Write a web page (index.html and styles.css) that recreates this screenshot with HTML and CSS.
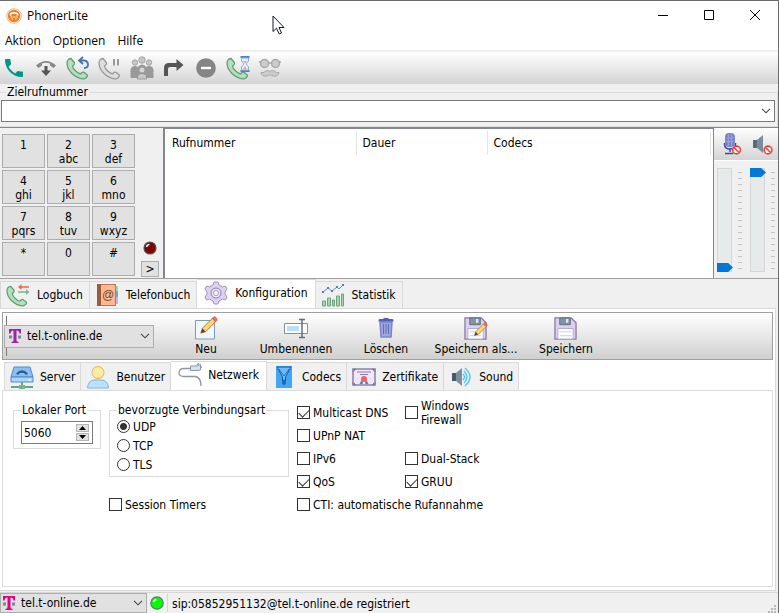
FILE: index.html
```html
<!DOCTYPE html>
<html lang="de">
<head>
<meta charset="utf-8">
<title>PhonerLite</title>
<link rel="stylesheet" href="styles.css">
</head>
<body>
<svg class="defs" aria-hidden="true">
  <symbol id="handset" viewBox="0 0 24 24"><path d="M1 7C1 4 3 2.500 5 2.500L8.300 6.500C9 7.500 8 9 6.500 10C7 13 11 17.200 14.500 18C15.500 16.500 17 15.800 18 16.300L21.500 19.300C21.500 21 19.500 22.800 17 22.800C9 22 1 14.500 1 7Z" stroke-width="1.300" stroke-linejoin="round"/></symbol>
  <symbol id="telekom" viewBox="0 0 14 16"><path d="M1 1H13V5.500H11.500C11.300 3.500 10.500 2.500 8.500 2.500V12C8.500 13.300 9 13.800 10.500 13.800V15H3.500V13.800C5 13.800 5.500 13.300 5.500 12V2.500C3.500 2.500 2.700 3.500 2.500 5.500H1Z"/><path fill="#788896" d="M1 7.500H4V10.500H1ZM10 7.500H13V10.500H10Z"/></symbol>
  <symbol id="chevron" viewBox="0 0 10 6"><path d="M1 .8L5 4.800L9 .8" fill="none" stroke="#444" stroke-width="1.100"/></symbol>
  <symbol id="pencil" viewBox="0 0 20 20"><path d="M2 18L3.500 13L14 2.500L17.500 6L7 16.500Z" fill="#ffd76b" stroke="#a0783c"/><path d="M2 18L3.500 13L7 16.500Z" fill="#574545"/><path d="M14 2.500L15.500 1Q18.500 .5 19 4.500L17.500 6Z" fill="#ef6f66" stroke="#b9605a"/></symbol>
  <symbol id="blocked" viewBox="0 0 10 10"><circle cx="5" cy="5" r="3.900" fill="#fff" stroke="#f44336" stroke-width="1.600"/><path d="M2.500 2.500L7.500 7.500" stroke="#f44336" stroke-width="1.600"/></symbol>
  <symbol id="floppy" viewBox="0 0 24 24"><path d="M1 1H18L23 6V23H1Z" fill="#dcd0f2" stroke="#8b75a1" stroke-width="1.300"/><path d="M6 1H17V8H6Z" fill="#8295a5" stroke="#5d6d80"/><path d="M12.500 2H15V6H12.500Z" fill="#dce9ef"/><path d="M4 12H20V23H4Z" fill="#fff" stroke="#b7a9cc"/><path d="M6 15.500H18M6 19.500H18" stroke="#a8dcf5"/></symbol>
</svg>

<div class="window">
  <header class="titlebar">
    <svg class="app-icon" viewBox="0 0 16 16"><circle cx="8" cy="8" r="7.300" fill="#fff" stroke="#f5b583"/><circle cx="8" cy="8" r="6.200" fill="#ee7f22"/><path d="M3.500 7.500Q3 4 8 4T12.500 7.500H10.500V6Q8 5.300 5.500 6V7.500Z" fill="#fff"/><path d="M4.500 9H6.500M7.300 9H8.700M9.500 9H11.500M5.500 11H7M9 11H10.500" stroke="#fff"/></svg>
    <h1>PhonerLite</h1>
    <div class="window-buttons">
      <button aria-label="Minimieren"><svg viewBox="0 0 12 12"><path d="M1 6.500H11"/></svg></button>
      <button aria-label="Maximieren"><svg viewBox="0 0 12 12"><path d="M1.500 1.500H10.500V10.500H1.500Z"/></svg></button>
      <button aria-label="Schließen"><svg viewBox="0 0 12 12"><path d="M1 1L11 11M11 1L1 11"/></svg></button>
    </div>
  </header>
  <nav class="menubar"><button>Aktion</button><button>Optionen</button><button>Hilfe</button></nav>

  <div class="toolbar">
    <button aria-label="Anrufen"><svg viewBox="0 0 24 24"><path fill="#009688" d="M6.600 10.800C8 13.600 10.400 15.900 13.200 17.400L15.400 15.200C15.700 14.900 16.100 14.800 16.400 15C17.500 15.400 18.700 15.600 20 15.600C20.600 15.600 21 16 21 16.600V20C21 20.600 20.600 21 20 21C10.600 21 3 13.400 3 4C3 3.400 3.500 3 4 3H7.500C8.100 3 8.500 3.400 8.500 4C8.500 5.300 8.700 6.500 9.100 7.600C9.200 8 9.100 8.300 8.900 8.600Z"/></svg></button>
    <button aria-label="Auflegen"><svg viewBox="0 0 24 24"><path fill="#888" d="M2 9.500Q12 .5 22 9.500L19.500 12L16 9.500V7.500Q12 6 8 7.500V9.500L4.500 12Z"/><path fill="#555" d="M10.500 10H13.500V14.500H17L12 20L7 14.500H10.500Z"/></svg></button>
    <button aria-label="Wahlwiederholung"><svg class="green" viewBox="0 0 24 24"><use href="#handset" width="24" height="24"/><path d="M17 1L13 4.500L17 8M13.500 4.500H18Q22 5 22 8.500T18 12" fill="none" stroke="#4474b8" stroke-width="1.800"/></svg></button>
    <button aria-label="Halten"><svg class="gray" viewBox="0 0 24 24"><use href="#handset" width="24" height="24"/><path d="M16 3V9.500M20 3V9.500" stroke="#999" stroke-width="2"/></svg></button>
    <button aria-label="Konferenz"><svg viewBox="0 0 24 24"><g fill="#c6c6c6" stroke="#999" stroke-width=".8"><circle cx="12" cy="4" r="3.200"/><circle cx="5" cy="6.500" r="2.700"/><circle cx="19" cy="6.500" r="2.700"/></g><path d="M.5 22V14Q1 10 5 10Q7 10 8 11Q9 8.500 12 8.500T16 11Q17 10 19 10Q23 10 23.500 14V22Z" fill="#999"/><circle cx="12" cy="14" r="2.500" fill="#d5d5d5"/><path d="M7.500 23V20Q8.500 17.500 12 17.500T16.500 20V23Z" fill="#c8c8c8" stroke="#888" stroke-width=".7"/></svg></button>
    <button aria-label="Weiterleiten"><svg viewBox="0 0 24 24"><path fill="#555" d="M2 20V12Q2 7 7 7H14.500V3L21.500 9L14.500 15V11H8Q6 11 6 13V20Z"/></svg></button>
    <button aria-label="Nicht stören"><svg viewBox="0 0 24 24"><circle cx="12" cy="12" r="9.800" fill="#858585"/><path d="M7 12H17" stroke="#fff" stroke-width="2.400"/></svg></button>
    <button aria-label="Anklopfen"><svg class="green" viewBox="0 0 24 24"><use href="#handset" width="24" height="24"/><path d="M14.500 1H23.500M14.500 15H23.500" stroke="#4b83d1" stroke-width="2"/><path d="M15.500 2H22.500V5L20 8L22.500 11V14H15.500V11L18 8L15.500 5Z" fill="#e9f3ff" stroke="#82aee6"/><path d="M17 5H21L19 7.500ZM17 13L19 10L21 13Z" fill="#e8a27c" stroke="none"/></svg></button>
    <button aria-label="Anonym"><svg viewBox="0 0 24 24"><g fill="#ccc" stroke="#aaa" stroke-width="1.500"><circle cx="6.500" cy="7.500" r="4"/><circle cx="17.500" cy="7.500" r="4"/><path d="M10.500 7H13.500M1 6H3M21 6H23" fill="none"/><path d="M12 15.500Q9.500 13 7 15.500Q5 17.500 3 16.500Q4 21 8.500 20Q11 20 12 18.500Q13 20 15.500 20Q20 21 21 16.500Q19 17.500 17 15.500Q14.500 13 12 15.500Z" stroke-width="1"/></g></svg></button>
  </div>

  <fieldset class="dial">
    <legend><label for="target">Zielrufnummer</label></legend>
    <div class="combo"><input id="target" type="text"><svg class="arrow"><use href="#chevron"/></svg></div>
  </fieldset>

  <section class="call">
    <div class="keys">
      <div class="keypad">
        <button>1</button><button>2<br>abc</button><button>3<br>def</button>
        <button>4<br>ghi</button><button>5<br>jkl</button><button>6<br>mno</button>
        <button>7<br>pqrs</button><button>8<br>tuv</button><button>9<br>wxyz</button>
        <button>*</button><button>0</button><button>#</button>
      </div>
      <div class="keys-side">
        <svg class="led" viewBox="0 0 14 14"><circle cx="7" cy="7" r="6" fill="#800000" stroke="#555" stroke-width="1.200"/><path d="M3.500 6Q4 3.500 6.500 3.500" fill="none" stroke="#fff" stroke-width="1.500"/></svg>
        <button class="more">&gt;</button>
      </div>
    </div>
    <div class="calls">
      <table>
        <thead><tr><th class="col-number">Rufnummer</th><th class="col-time">Dauer</th><th>Codecs</th></tr></thead>
      </table>
    </div>
    <div class="audio">
      <div class="audio-buttons">
        <button aria-label="Mikrofon stumm"><svg viewBox="0 0 24 24"><path d="M6.500 11V12Q6.500 17 12 17T17.500 12V11M12 17V20M7 21.500H15" fill="none" stroke="#3949ab" stroke-width="1.500"/><rect x="7" y="1" width="10" height="14" rx="4" fill="#7986cb"/><path d="M10.500 2V14M13.500 2V14M8 6H16M8 9.500H16" stroke="#9fa8da" stroke-width=".8"/><use href="#blocked" x="13.500" y="13" width="10" height="10"/></svg></button>
        <button aria-label="Lautsprecher stumm"><svg viewBox="0 0 24 24"><path d="M3 8H7V16H3Z" fill="#546e7a"/><path d="M7 8L13 3V21L7 16Z" fill="#78909c"/><use href="#blocked" x="13" y="13" width="10" height="10"/></svg></button>
      </div>
      <div class="sliders">
        <input type="range" min="0" max="16" value="0" aria-label="Mikrofonpegel">
        <span class="ticks"></span>
        <input type="range" min="0" max="16" value="16" aria-label="Lautstärke">
        <span class="ticks"></span>
      </div>
    </div>
  </section>

  <div class="tabs outer" role="tablist">
    <button role="tab" class="tab"><svg class="green" viewBox="0 0 24 24"><use href="#handset" y="1" width="23" height="23"/><path d="M13 4H23" stroke-width="1.600" stroke="#f4694c"/><path d="M12 9H22" stroke-width="1.600" stroke="#78bd91"/><path d="M12 4L15.500 1V7Z" fill="#f4694c" stroke="none"/><path d="M23.500 9L20 6V12Z" fill="#78bd91" stroke="none"/></svg>Logbuch</button>
    <button role="tab" class="tab"><svg viewBox="0 0 24 24"><path d="M20 3H23V8H20Z" fill="#a5d6a7"/><path d="M20 8H23V14H20Z" fill="#64a9e8"/><path d="M20 14H23V21H20Z" fill="#c5b5e9"/><rect x="2.500" y="1.500" width="18" height="21" fill="#ffb78d" stroke="#bf7650"/><path d="M2 1H6V23H2Z" fill="#995b40"/><text x="7" y="15.500" class="at-sign">@</text></svg>Telefonbuch</button>
    <button role="tab" class="tab active" aria-selected="true"><svg viewBox="0 0 24 24"><path d="M10 1H14L15 4L18.500 6L21.500 5L23 8L21 11V13L23 16L21.500 19L18.500 18L15 20L14 23H10L9 20L5.500 18L2.500 19L1 16L3 13V11L1 8L2.500 5L5.500 6L9 4Z" fill="#dcd2f1" stroke="#a493bc"/><circle cx="12" cy="12" r="5" fill="#eee8fb" stroke="#8c7aa6"/><circle cx="12" cy="12" r="2.500" fill="#fff" stroke="#a493bc"/></svg>Konfiguration</button>
    <button role="tab" class="tab"><svg viewBox="0 0 24 24"><path d="M1.500 23V18H4.500V23ZM6.500 23V15H9.500V23ZM11.500 23V17H13.500V23ZM15.500 23V13H18.500V23ZM20.500 23V11H22.500V23Z" fill="#a5d3af" stroke="#6ca77c"/><path d="M2 9L7 5L11 8L16 4L18 6L22 2" fill="none" stroke="#5a8acc"/><path d="M1 8H3V10H1ZM6 4H8V6H6ZM10 7H12V9H10ZM15 3H17V5H15ZM21 1H23V3H21Z" fill="#4d7fc3"/></svg>Statistik</button>
  </div>

  <main class="pane">
    <div class="profile-bar">
      <div class="profile-slot">
        <div class="picker"><svg class="telekom purple"><use href="#telekom"/></svg><select aria-label="Profil"><option>tel.t-online.de</option></select><svg class="arrow"><use href="#chevron"/></svg></div>
      </div>
      <div class="actions">
        <button><svg viewBox="0 0 24 24"><path d="M1.500 4.500H20.500V23H1.500Z" fill="#f0f8ff" stroke="#7c9bb5"/><use href="#pencil" x="5" y="0" width="19" height="19"/></svg>Neu</button>
        <button><svg viewBox="0 0 24 24"><path d="M.5 7.500H23.500V17.500H.5Z" fill="#fff" stroke="#7f90a0"/><path d="M3 10H15V15H3Z" fill="#b7e1fa"/><path d="M15 3.500H21M18 3.500V21.500M15 21.500H21" stroke="#60707e" stroke-width="1.500"/></svg>Umbenennen</button>
        <button><svg viewBox="0 0 24 24"><path d="M6 6H18L17 21H7Z" fill="#9fa8da" stroke="#7986cb" stroke-width="1.500"/><path d="M4.500 5.500V4Q4.500 3 6 3H9L10 2H14L15 3H18Q19.500 3 19.500 4V5.500Z" fill="#5262bb"/><path d="M9.500 8V18M12 8V18M14.500 8V18" stroke="#5c6bc0"/></svg>Löschen</button>
        <button><svg viewBox="0 0 24 24"><use href="#floppy" width="23" height="23" y="1"/><use href="#pencil" x="9" y="6" width="15" height="15"/></svg>Speichern als...</button>
        <button><svg viewBox="0 0 24 24"><use href="#floppy" width="23" height="23" y="1"/></svg>Speichern</button>
      </div>
    </div>

    <div class="tabs inner" role="tablist">
      <button role="tab" class="tab"><svg viewBox="0 0 24 24"><path d="M4 2H20L23 12H1Z" fill="#89bff2" stroke="#5688c7"/><path d="M1 12H23V17H1Z" fill="#a9d5ff" stroke="#5688c7"/><path d="M6 8.500Q12 2 18 8.500L16 10L14 8H10L8 10Z" fill="#286098"/><path d="M18 15H21" stroke="#fff"/><path d="M12 17V22M1 22H23" stroke="#6aa57c" stroke-width="2"/><path d="M9 20H15V24H9Z" fill="#78b58c"/></svg>Server</button>
      <button role="tab" class="tab"><svg viewBox="0 0 24 24"><circle cx="12" cy="7.500" r="6" fill="#ffeb9c" stroke="#ddb569"/><path d="M1.500 23Q2 15 9 15H15Q22 15 22.500 23Z" fill="#b9e3ff" stroke="#82b3dd"/></svg>Benutzer</button>
      <button role="tab" class="tab active" aria-selected="true"><svg viewBox="0 0 24 24"><path d="M14 5.500H6Q1 5.500 1 9.500T6 13.500H17Q23 14 23 23M19 2L21 0M22.500 4H24" fill="none" stroke="#8999a8" stroke-width="1.300"/><path d="M12.500 3H19L22.500 1.500V7L19 7.500H12.500Z" fill="#d5e3ec" stroke="#8999a8"/></svg>Netzwerk</button>
      <button role="tab" class="tab"><svg viewBox="0 0 24 24"><path d="M4 1H20V23H4Z" fill="#42a5f5"/><path d="M5 2H19L13.500 12V16H10.500V12Z" fill="#75baf1" stroke="#1261a5"/><path d="M7 4L12 11L17 4" fill="none" stroke="#1a76c9"/><path d="M12 14Q8 19 12 20Q16 19 12 14Z" fill="#1769bd"/></svg>Codecs</button>
      <button role="tab" class="tab"><svg viewBox="0 0 24 24"><path d="M1 4H23V20H1Z" fill="#eee7fb" stroke="#8f80ab" stroke-width="1.500"/><path d="M1 4H4L1 7ZM23 4H20L23 7ZM1 20H4L1 17ZM23 20H20L23 17ZM5 7H19M8 9.500H16" fill="#7d6d99" stroke="#8f80ab"/><path d="M10 15L8 19L11 18M14 15L16 19L13 18" fill="#5688c7" stroke="#5688c7"/><circle cx="12" cy="14" r="3" fill="#f0645c"/></svg>Zertifikate</button>
      <button role="tab" class="tab"><svg viewBox="0 0 24 24"><path d="M3 8H7V16H3Z" fill="#455a64"/><path d="M7 8L13 3V21L7 16Z" fill="#78909c"/><path d="M14 9Q17 12 14 15M15 6Q21 12 15 18M16 3Q26 12 16 21" fill="none" stroke="#4fc3f7" stroke-width="1.400"/></svg>Sound</button>
    </div>

    <form class="network">
      <fieldset class="port">
        <legend><label for="port">Lokaler Port</label></legend>
        <div class="spin"><input id="port" type="text" value="5060"><span class="steps"><button type="button" aria-label="Höher"><svg viewBox="0 0 7 4"><path d="M0 4L3.500 0L7 4Z"/></svg></button><button type="button" aria-label="Niedriger"><svg viewBox="0 0 7 4"><path d="M0 0L3.500 4L7 0Z"/></svg></button></span></div>
      </fieldset>
      <fieldset class="transport">
        <legend>bevorzugte Verbindungsart</legend>
        <label><input type="radio" name="transport" checked>UDP</label>
        <label><input type="radio" name="transport">TCP</label>
        <label><input type="radio" name="transport">TLS</label>
      </fieldset>
      <label><input type="checkbox" checked>Multicast DNS</label>
      <label class="narrow"><input type="checkbox">Windows Firewall</label>
      <label class="wide"><input type="checkbox">UPnP NAT</label>
      <label><input type="checkbox">IPv6</label>
      <label><input type="checkbox">Dual-Stack</label>
      <label><input type="checkbox" checked>QoS</label>
      <label><input type="checkbox" checked>GRUU</label>
      <label class="timers"><input type="checkbox">Session Timers</label>
      <label class="wide"><input type="checkbox">CTI: automatische Rufannahme</label>
    </form>
  </main>

  <footer class="statusbar">
    <div class="picker"><svg class="telekom pink"><use href="#telekom"/></svg><select aria-label="Aktives Profil"><option>tel.t-online.de</option></select><svg class="arrow"><use href="#chevron"/></svg></div>
    <svg class="led" viewBox="0 0 14 14"><circle cx="7" cy="7" r="6.200" fill="#0f0" stroke="#6a756a" stroke-width="1.200"/><path d="M3.500 6Q4 3.500 6.500 3.500" fill="none" stroke="#fff" stroke-width="1.500"/></svg>
    <span class="status">sip:05852951132@tel.t-online.de registriert</span>
    <svg class="grip" viewBox="0 0 9 9"><path d="M7 1H9V3H7ZM4 4H6V6H4ZM7 4H9V6H7ZM1 7H3V9H1ZM4 7H6V9H4ZM7 7H9V9H7Z" fill="#b8b8b8"/></svg>
  </footer>
  <svg class="pointer" viewBox="0 0 13 20"><path d="M1 1V16.500L4.500 13.200L7.200 19L9.500 18L7 12.500H12Z" fill="#fff" stroke="#111827"/></svg>
</div>
</body>
</html>
```
FILE: styles.css
```css
* { box-sizing: border-box; }

body {
  margin: 0;
  color: #000;
  background: #f0f0f0;
  font: 12px/14px "DejaVu Sans Condensed", "DejaVu Sans", "Noto Sans", sans-serif;
}

button, input, select { font: inherit; color: inherit; }

button {
  padding: 0;
  border: 0;
  background: none;
}

svg { flex: none; }

.defs { display: none; }

.window {
  position: relative;
  display: flex;
  flex-direction: column;
  min-height: 100vh;
  border-top: 1px solid #6b6b70;
  border-right: 1px solid #6b6b70;
}

.titlebar {
  display: flex;
  align-items: center;
  height: 30px;
  padding-left: 6px;
  background: #fff;
}
.app-icon { width: 16px; height: 16px; margin-right: 5px; }
.titlebar h1 {
  flex: 1;
  margin: 0;
  font: 12px/16px "Open Sans", "Noto Sans", sans-serif;
}
.window-buttons { display: flex; }
.window-buttons button { width: 46px; height: 28px; }
.window-buttons svg { width: 12px; height: 12px; fill: none; stroke: #000; }

.menubar {
  display: flex;
  gap: 12px;
  height: 21px;
  padding: 1px 5px 0;
  background: #fff;
  border-bottom: 2px solid #f0f0f0;
  font-family: "Open Sans", "Noto Sans", sans-serif;
}

.toolbar {
  display: flex;
  gap: 4px;
  align-items: center;
  height: 32px;
  background: linear-gradient(#fff, #d4d4d4);
}
.toolbar button { width: 28px; height: 28px; }
.toolbar svg { display: block; width: 24px; height: 24px; margin: 0 auto; }
.green { fill: #b4dfbd; stroke: #5f9f72; }
.gray { fill: #ddd; stroke: #999; }

fieldset {
  min-width: 0;
  margin: 0;
  padding: 0;
  border: 1px solid #dcdcdc;
}
legend { padding: 0 2px; }

.dial {
  margin-top: 1px;
  padding-bottom: 4px;
  border-left: 0;
}
.dial legend { margin-left: 5px; }
.combo { position: relative; margin: 1px 2px 0 1px; }
.combo input {
  display: block;
  width: 100%;
  height: 22px;
  padding: 0 20px 0 4px;
  border: 1px solid #7a7a7a;
  background: #fff;
}
.arrow {
  position: absolute;
  right: 4px;
  top: 50%;
  width: 10px;
  height: 6px;
  margin-top: -3px;
  pointer-events: none;
}

.call {
  display: flex;
  height: 152px;
  border-top: 1px solid #888;
  border-bottom: 1px solid #a0a0a0;
}
.keys {
  display: flex;
  justify-content: space-between;
  width: 163px;
  padding: 6px 4px 1px 2px;
}
.keypad {
  display: grid;
  grid-template-columns: repeat(3, 43px);
  grid-auto-rows: 34px;
  gap: 2px;
}
.keypad button {
  display: flex;
  justify-content: center;
  padding-top: 3px;
  border: 1px solid #adadad;
  background: #e1e1e1;
  text-align: center;
}
.keys-side {
  display: flex;
  flex-direction: column;
  align-items: center;
  justify-content: flex-end;
  gap: 6px;
}
.led { width: 14px; height: 14px; }
.more {
  width: 18px;
  height: 16px;
  border: 1px solid #adadad;
  background: #e1e1e1;
}

.calls {
  flex: 1;
  padding: 2px 2px 2px 1px;
  border: solid #828790;
  border-width: 1px 1px 0 2px;
  background: #fff;
}
.calls table {
  width: 100%;
  border-collapse: collapse;
  table-layout: fixed;
}
.calls th {
  height: 24px;
  padding: 0 6px;
  border-right: 1px solid #e5e5e5;
  font-weight: normal;
  text-align: left;
}
.col-number { width: 190px; }
.col-time { width: 131px; }

.audio { width: 64px; }
.audio-buttons {
  display: flex;
  justify-content: space-around;
  align-items: center;
  height: 33px;
  border-bottom: 1px solid #fff;
  background: linear-gradient(#fff, #d4d4d4);
}
.audio-buttons svg { display: block; width: 24px; height: 24px; }
.sliders {
  display: grid;
  grid-template-columns: 16px 7px 16px 7px;
  column-gap: 5px;
  padding: 7px 0 0 3px;
}
.sliders input {
  appearance: none;
  writing-mode: vertical-lr;
  direction: rtl;
  width: 16px;
  height: 104px;
  margin: 0;
  background: linear-gradient(#e7eaea, #e7eaea) 1px 1px / 13px 102px no-repeat, linear-gradient(#d6d6d6, #d6d6d6) 0 0 / 15px 104px no-repeat;
}
.sliders input::-webkit-slider-thumb {
  appearance: none;
  width: 16px;
  height: 9px;
  background: #0078d7;
  clip-path: polygon(0 0, 70% 0, 100% 50%, 70% 100%, 0 100%);
}
.ticks {
  width: 4px;
  height: 97px;
  margin-top: 4px;
  background: repeating-linear-gradient(#c4c4c4 0 1px, transparent 1px 6px);
}

.tabs {
  display: flex;
  align-items: flex-end;
  height: 30px;
  margin-bottom: -1px;
}
.tab {
  display: flex;
  align-items: center;
  gap: 6px;
  height: 27px;
  margin-bottom: 1px;
  padding: 0 5px;
  border: 1px solid #d9d9d9;
  border-bottom: 0;
  background: #f0f0f0;
  white-space: nowrap;
}
.tab + .tab { border-left: 0; }
.tab svg { width: 24px; height: 24px; }
.outer .tab { gap: 7px; padding-right: 6px; }
.tabs .tab.active {
  height: 30px;
  margin-bottom: 0;
  padding: 0 7px 3px;
  background: #fff;
}
.at-sign { font: 12px "Liberation Sans", sans-serif; fill: #754936; }

.pane {
  flex: 1;
  display: flex;
  flex-direction: column;
  margin-right: 2px;
  padding: 3px 2px;
  border: 1px solid #d9d9d9;
  border-left: 0;
  background: #fff;
}
.profile-bar {
  display: flex;
  align-items: center;
  height: 48px;
  border: 1px solid #a0a0a0;
  background: linear-gradient(#fff, #d0d0d0);
}
.profile-slot {
  display: flex;
  align-items: center;
  height: 40px;
  margin-left: 3px;
  border-left: 1px solid #777;
}
.profile-slot .picker { margin-left: -3px; }
.picker {
  position: relative;
  width: 150px;
  height: 23px;
}
.picker select {
  appearance: none;
  width: 100%;
  height: 100%;
  padding: 0 20px 0 22px;
  border: 1px solid #adadad;
  border-radius: 0;
  background: #e1e1e1;
}
.telekom {
  position: absolute;
  left: 4px;
  top: 3px;
  width: 14px;
  height: 16px;
  pointer-events: none;
}
.purple { fill: #9c279c; }
.pink { fill: #e20087; }

.actions {
  display: flex;
  margin-left: 7px;
}
.actions button {
  display: flex;
  flex-direction: column;
  align-items: center;
  gap: 2px;
  width: 90px;
  white-space: nowrap;
}
.actions svg { width: 24px; height: 24px; }

.inner { height: 31px; padding-left: 2px; }
.inner .tab { height: 28px; }

.network {
  flex: 1;
  display: grid;
  grid-template-columns: 88px 180px 100px 1fr;
  grid-auto-rows: 23px;
  column-gap: 8px;
  padding: 10px;
  border: 1px solid #dcdcdc;
}
.network label {
  display: flex;
  align-items: center;
  gap: 3px;
}
.network legend label { display: inline; }
.network input[type="checkbox"],
.network input[type="radio"] {
  appearance: none;
  flex: none;
  width: 13px;
  height: 13px;
  margin: 0;
  border: 1px solid #333;
  background: #fff;
}
.network input[type="radio"] { border-radius: 50%; }
.network input[type="radio"]:checked {
  background: radial-gradient(circle, #333 0 3px, #fff 4px);
}
.network input[type="checkbox"]:checked::before {
  content: "";
  display: block;
  width: 9px;
  height: 5px;
  margin: 2px 0 0 1px;
  border: solid #333;
  border-width: 0 0 1px 1px;
  transform: rotate(-45deg);
}
.port, .transport { grid-row: 1 / 5; align-self: start; margin-top: 2px; }
.port legend, .transport legend { padding: 0 1px; white-space: nowrap; }
.port { grid-column: 1; padding: 4px 7px; }
.transport { grid-column: 2; padding: 0 7px 2px; }
.transport label { height: 19px; }
.spin {
  display: flex;
  align-items: center;
  justify-content: space-between;
  height: 23px;
  padding: 0 3px 0 1px;
  border: 1px solid #7a7a7a;
}
.spin input { flex: 1; width: 0; padding: 0 1px; border: 0; }
.steps { display: grid; gap: 1px; }
.steps button {
  display: grid;
  place-items: center;
  width: 13px;
  height: 8px;
  border: 1px solid #b5b5b5;
  background: #e1e1e1;
}
.steps svg { width: 7px; height: 4px; }
.narrow { width: 80px; }
.wide { grid-column: 3 / 5; }
.timers { grid-column: 2; }

.statusbar {
  display: flex;
  align-items: center;
  gap: 3px;
  height: 21px;
  margin-top: 1px;
  border-top: 1px solid #d7d7d7;
}
.statusbar .picker { width: 147px; height: 20px; }
.statusbar select { padding-left: 20px; }
.statusbar .telekom { left: 2px; top: 2px; }
.status {
  flex: 1;
  padding: 3px 4px 1px;
  border-left: 1px solid #d7d7d7;
}
.grip { align-self: flex-end; width: 9px; height: 9px; margin-right: 2px; }

.pointer {
  position: absolute;
  left: 272px;
  top: 14px;
  width: 13px;
  height: 20px;
}
```
